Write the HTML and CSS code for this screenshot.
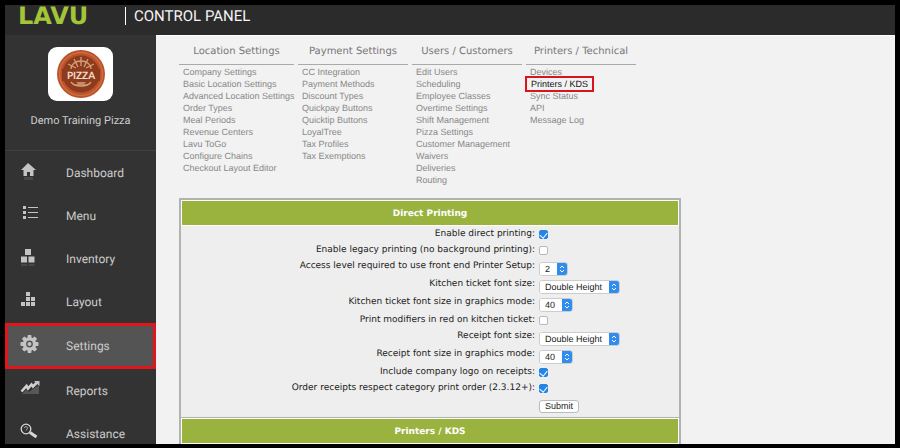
FILE: index.html
```
<!DOCTYPE html>
<html lang="en">
<head>
  <meta charset="UTF-8" />
  <meta name="viewport" content="width=device-width, initial-scale=1.0"/>
  <title>Lavu Control Panel</title>
  <link rel="stylesheet" href="styles.css">
</head>
<body>
  <div class="app">
    <header class="topbar">
      <span class="logo">LAVU</span>
      <span class="topbar-title">CONTROL PANEL</span>
    </header>

    <div class="layout">
      <aside class="sidebar">
        <div class="account">
          <div class="account-logo">
            <svg width="50" height="50" viewBox="0 0 50 50">
              <circle cx="25" cy="25" r="24" fill="#b9532b"/>
              <circle cx="25" cy="25" r="21.5" fill="none" stroke="#d06c40" stroke-width="1.5"/>
              <circle cx="25" cy="25" r="18.5" fill="#8e3a1c"/>
              <g stroke="#d3a17c" stroke-width="1.3" fill="none">
                <path d="M25 8v9M18 10l4 8M32 10l-4 8M12 15l8 4M38 15l-8 4"/>
                <path d="M15 20a10 8 0 0 1 20 0M15 33a11 7 0 0 0 20 0M18 36h14"/>
              </g>
              <path d="M20 33h10l-5 5z" fill="#c58d67"/>
              <rect x="6" y="20" width="38" height="12" fill="#8e3a1c"/>
              <text x="25" y="30" class="badge-text">PIZZA</text>
            </svg>
          </div>
          <div class="account-name">Demo Training Pizza</div>
        </div>

        <nav class="menu">
          <a class="menu-item" href="#">
            <svg class="menu-icon" viewBox="0 0 20 20"><path d="M8 2L1 9h2.500v6H7v-4h3v4h3.500V9H16z"/><path d="M4 16h9v3H4z" opacity=".15"/></svg>
            Dashboard
          </a>
          <a class="menu-item" href="#">
            <svg class="menu-icon" viewBox="0 0 20 20"><path d="M3 2h3v3H3zM3 7h3v3H3zM3 12h3v3H3zM8 3h10v1H8zM8 8h10v1H8zM8 13h10v1H8z"/></svg>
            Menu
          </a>
          <a class="menu-item" href="#">
            <svg class="menu-icon" viewBox="0 0 20 20"><path d="M5 2h6v6H5zM1 9.500h6v6H1zM8.500 9.500h6v6h-6z"/><path d="M1 17h6v2H1zM8.500 17h6v2h-6z" opacity=".15"/></svg>
            Inventory
          </a>
          <a class="menu-item" href="#">
            <svg class="menu-icon" viewBox="0 0 20 20"><path d="M6 2h4v4H6zM6 7h4v4H6zM11 7h4v4h-4zM1 12h4v4H1zM6 12h4v4H6zM11 12h4v4h-4z"/></svg>
            Layout
          </a>
          <a class="menu-item active" href="#">
            <svg class="menu-icon" viewBox="0 0 20 20">
              <g transform="translate(9.500 9)">
                <circle r="5" fill="none" stroke="#c4c4c4" stroke-width="3.200"/>
                <circle r="2"/>
                <path d="M-1.700-9h3.400l.6 4h-4.600zM-1.700 9h3.400l.6-4h-4.600zM-9-1.700v3.400l4 .6v-4.600zM9-1.700v3.400l-4 .6v-4.600z"/>
                <path transform="rotate(45)" d="M-1.700-9h3.400l.6 4h-4.600zM-1.700 9h3.400l.6-4h-4.600zM-9-1.700v3.400l4 .6v-4.600zM9-1.700v3.400l-4 .6v-4.600z"/>
              </g>
            </svg>
            Settings
          </a>
          <a class="menu-item" href="#">
            <svg class="menu-icon" viewBox="0 0 20 20"><path d="M1.500 12.500L6.500 7l1.500 2.500L11.500 5.500l1.500 2L17 3.500" fill="none" stroke="#d0d0d0" stroke-width="2.600"/><path d="M14 2h5.500v5z"/><path d="M2 15l4-4 3 2 4-3 6-4v9z" opacity=".25"/></svg>
            Reports
          </a>
          <a class="menu-item" href="#">
            <svg class="menu-icon" viewBox="0 0 20 20"><circle cx="6" cy="7" r="4.800" fill="none" stroke="#d8d8d8" stroke-width="1.300"/><path d="M4.500 6a1.500 1.500 0 1 1 2 1.500L6 8.500" fill="none" stroke="#aaa"/><path d="M10 10.500L16.500 15" stroke="#d8d8d8" stroke-width="3"/></svg>
            Assistance
          </a>
        </nav>
      </aside>

      <main class="content">
        <nav class="settings-nav">
          <div class="nav-col">
            <h2>Location Settings</h2>
            <ul>
              <li><a href="#">Company Settings</a></li>
              <li><a href="#">Basic Location Settings</a></li>
              <li><a href="#">Advanced Location Settings</a></li>
              <li><a href="#">Order Types</a></li>
              <li><a href="#">Meal Periods</a></li>
              <li><a href="#">Revenue Centers</a></li>
              <li><a href="#">Lavu ToGo</a></li>
              <li><a href="#">Configure Chains</a></li>
              <li><a href="#">Checkout Layout Editor</a></li>
            </ul>
          </div>
          <div class="nav-col">
            <h2>Payment Settings</h2>
            <ul>
              <li><a href="#">CC Integration</a></li>
              <li><a href="#">Payment Methods</a></li>
              <li><a href="#">Discount Types</a></li>
              <li><a href="#">Quickpay Buttons</a></li>
              <li><a href="#">Quicktip Buttons</a></li>
              <li><a href="#">LoyalTree</a></li>
              <li><a href="#">Tax Profiles</a></li>
              <li><a href="#">Tax Exemptions</a></li>
            </ul>
          </div>
          <div class="nav-col">
            <h2>Users / Customers</h2>
            <ul>
              <li><a href="#">Edit Users</a></li>
              <li><a href="#">Scheduling</a></li>
              <li><a href="#">Employee Classes</a></li>
              <li><a href="#">Overtime Settings</a></li>
              <li><a href="#">Shift Management</a></li>
              <li><a href="#">Pizza Settings</a></li>
              <li><a href="#">Customer Management</a></li>
              <li><a href="#">Waivers</a></li>
              <li><a href="#">Deliveries</a></li>
              <li><a href="#">Routing</a></li>
            </ul>
          </div>
          <div class="nav-col">
            <h2>Printers / Technical</h2>
            <ul>
              <li><a href="#">Devices</a></li>
              <li><a class="current" href="#">Printers / KDS</a></li>
              <li><a href="#">Sync Status</a></li>
              <li><a href="#">API</a></li>
              <li><a href="#">Message Log</a></li>
            </ul>
          </div>
        </nav>

        <form class="panel">
          <h3>Direct Printing</h3>
          <div class="rows">
            <div class="row">
              <label for="direct">Enable direct printing:</label>
              <div class="field"><input type="checkbox" id="direct" checked></div>
            </div>
            <div class="row">
              <label for="legacy">Enable legacy printing (no background printing):</label>
              <div class="field"><input type="checkbox" id="legacy"></div>
            </div>
            <div class="row row-select">
              <label for="access">Access level required to use front end Printer Setup:</label>
              <div class="field"><span class="select"><select id="access"><option>2</option></select><svg viewBox="0 0 10 12"><path d="M3 5l2-2 2 2M3 7l2 2 2-2"/></svg></span></div>
            </div>
            <div class="row row-select">
              <label for="kitchen">Kitchen ticket font size:</label>
              <div class="field"><span class="select"><select id="kitchen"><option>Double Height</option></select><svg viewBox="0 0 10 12"><path d="M3 5l2-2 2 2M3 7l2 2 2-2"/></svg></span></div>
            </div>
            <div class="row row-select">
              <label for="kitchenGraphics">Kitchen ticket font size in graphics mode:</label>
              <div class="field"><span class="select"><select id="kitchenGraphics"><option>40</option></select><svg viewBox="0 0 10 12"><path d="M3 5l2-2 2 2M3 7l2 2 2-2"/></svg></span></div>
            </div>
            <div class="row">
              <label for="red">Print modifiers in red on kitchen ticket:</label>
              <div class="field"><input type="checkbox" id="red"></div>
            </div>
            <div class="row row-select">
              <label for="receipt">Receipt font size:</label>
              <div class="field"><span class="select"><select id="receipt"><option>Double Height</option></select><svg viewBox="0 0 10 12"><path d="M3 5l2-2 2 2M3 7l2 2 2-2"/></svg></span></div>
            </div>
            <div class="row row-select">
              <label for="receiptGraphics">Receipt font size in graphics mode:</label>
              <div class="field"><span class="select"><select id="receiptGraphics"><option>40</option></select><svg viewBox="0 0 10 12"><path d="M3 5l2-2 2 2M3 7l2 2 2-2"/></svg></span></div>
            </div>
            <div class="row">
              <label for="companyLogo">Include company logo on receipts:</label>
              <div class="field"><input type="checkbox" id="companyLogo" checked></div>
            </div>
            <div class="row">
              <label for="order">Order receipts respect category print order (2.3.12+):</label>
              <div class="field"><input type="checkbox" id="order" checked></div>
            </div>
            <div class="row row-submit">
              <button class="btn" type="submit">Submit</button>
            </div>
          </div>
        </form>

        <section class="panel">
          <h3>Printers / KDS</h3>
        </section>
      </main>
    </div>
  </div>
</body>
</html>
```

FILE: styles.css
```
* {
  box-sizing: border-box;
}

body {
  margin: 0;
  font-family: "DejaVu Sans", Verdana, sans-serif;
  font-size: 9px;
  color: #222;
  text-rendering: geometricPrecision;
}

a {
  color: inherit;
  text-decoration: none;
}

.app {
  display: flex;
  flex-direction: column;
  height: 100vh;
  border: 5px solid #000;
  border-bottom-width: 4px;
  background: #f2f2f2;
  overflow: hidden;
}

/* Top bar */
.topbar {
  display: flex;
  flex: none;
  align-items: center;
  height: 30px;
  padding: 0 13px 8px;
  background: #2b2b2b;
}

.logo {
  width: 107px;
  font-size: 24px;
  line-height: 20px;
  font-weight: bold;
  color: #a3c539;
}

.topbar-title {
  padding-left: 8px;
  border-left: 1px solid #fff;
  font-family: Roboto, sans-serif;
  font-size: 15px;
  line-height: 18px;
  color: #f4f4f4;
}

.layout {
  display: flex;
  flex: 1;
  min-height: 0;
}

/* Sidebar */
.sidebar {
  flex: none;
  width: 151px;
  background: #333;
  color: #ccc;
  font-family: Roboto, sans-serif;
  overflow: hidden;
}

.account {
  display: flex;
  flex-direction: column;
  align-items: center;
  height: 116px;
  padding-top: 12px;
  border-bottom: 1px solid #414141;
}

.account-logo {
  display: flex;
  align-items: center;
  justify-content: center;
  width: 65px;
  height: 54px;
  border-radius: 9px;
  background: #fff;
}

.badge-text {
  fill: #f2dfcd;
  font: bold 10px Lato, sans-serif;
  text-anchor: middle;
}

.account-name {
  margin-top: 13px;
  font-size: 11px;
  line-height: 14px;
}

.menu-item {
  display: flex;
  align-items: center;
  height: 43px;
  padding-left: 15px;
  font-size: 12px;
}

.menu-icon {
  flex: none;
  width: 20px;
  height: 20px;
  margin-right: 26px;
  margin-bottom: 3px;
  fill: #c4c4c4;
}

.menu-item.active {
  height: 46px;
  padding-left: 12px;
  border: 3px solid #e0161c;
  background: #545454;
}

/* Settings links */
.content {
  flex: 1;
  padding: 8px 23px 0;
  border-top: 1px solid #fff;
  overflow: hidden;
}

.settings-nav {
  display: flex;
  gap: 4px;
  height: 154px;
}

.nav-col {
  flex: none;
  width: 110px;
}

.nav-col:first-child {
  width: 115px;
}

.nav-col h2 {
  margin: 0;
  padding-bottom: 5px;
  border-bottom: 1px solid #aaa;
  font-size: 10px;
  line-height: 15px;
  font-weight: normal;
  text-align: center;
  color: #777;
}

.nav-col ul {
  margin: 0;
  padding: 1px 4px 0;
  list-style: none;
  font-family: "Liberation Sans", Arial, sans-serif;
  line-height: 12px;
  color: #888;
}

.nav-col li {
  height: 12px;
  white-space: nowrap;
}

.nav-col .current {
  margin-left: -5px;
  padding: 1px 4px;
  border: 2px solid #d8141f;
  color: #111;
}

/* Panels */
.panel {
  max-width: 502px;
  border: 2px solid #b0b4b0;
  border-bottom-width: 1px;
}

.panel + .panel {
  border-top: 0;
}

.panel h3 {
  margin: 0;
  padding-top: 2px;
  border: 1px solid #fff;
  background: #9ab33f;
  color: #fff;
  font-size: 9px;
  line-height: 22px;
  text-align: center;
}

.rows {
  padding-top: 1px;
  background: #eee;
}

.row {
  display: grid;
  grid-template-columns: 354px 1fr;
  column-gap: 4px;
  height: 16px;
  line-height: 15px;
}

.row-select {
  height: 18px;
}

.row label {
  text-align: right;
}

.field {
  padding-top: 3px;
}

.field input {
  display: block;
  appearance: none;
  width: 9px;
  height: 9px;
  margin: 0;
  border: 1px solid #b8b8b8;
  border-radius: 2px;
  background: #fff;
}

.field input:checked {
  display: grid;
  place-items: center;
  border-color: #2386e6;
  background: #2386e6;
}

.field input:checked::before {
  content: "";
  width: 4px;
  height: 6px;
  border: solid #fff;
  border-width: 0 1px 1px 0;
  transform: rotate(40deg);
}

.select {
  display: flex;
  width: max-content;
  border: 1px solid #ccc;
  border-radius: 3px;
  background: #fff;
  overflow: hidden;
}

.select select {
  appearance: none;
  height: 12px;
  margin: 0;
  padding: 0 6px 0 5px;
  border: 0;
  background: #fff;
  color: #222;
  font: 9px "Liberation Sans", Arial, sans-serif;
  text-rendering: geometricPrecision;
}

.select svg {
  width: 10px;
  height: 12px;
  background: #2f8df0;
  fill: none;
  stroke: #fff;
}

.row-submit {
  height: 20px;
  padding-top: 3px;
}

.btn {
  grid-column: 2;
  justify-self: start;
  height: 13px;
  padding: 0 5px;
  border: 1px solid #bbb;
  border-radius: 3px;
  background: #fff;
  color: #222;
  font: 9px/11px "Liberation Sans", Arial, sans-serif;
}
```
